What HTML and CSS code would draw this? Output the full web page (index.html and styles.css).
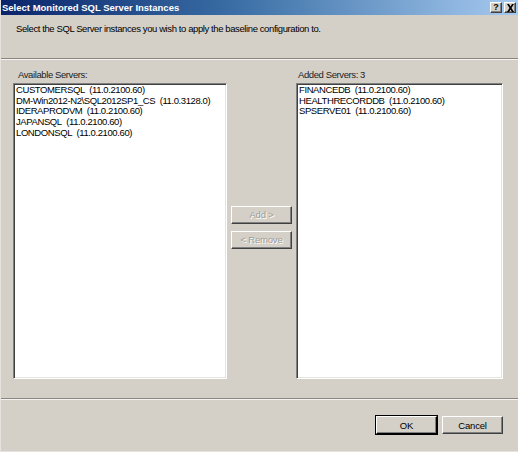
FILE: index.html
```html
<!DOCTYPE html>
<html>
<head>
<meta charset="utf-8">
<link rel="stylesheet" href="styles.css">
</head>
<body>
<div class="window">
  <div class="titlebar">
    <span class="title">Select Monitored SQL Server Instances</span>
    <div class="tbtns">
      <span class="tbtn">?</span>
      <span class="tbtn x">
        <svg width="9" height="8" viewBox="0 0 9 8"><path d="M1 0h2l1.5 2.5L6 0h2L5.5 4 8 8H6L4.5 5.5 3 8H1l2.5-4z" fill="#000"/></svg>
      </span>
    </div>
  </div>
  <div class="header">Select the SQL Server instances you wish to apply the baseline configuration to.</div>
  <div class="sep"></div>
  <div class="main">
    <div class="col left">
      <div class="label">Available Servers:</div>
      <div class="list">
        <div>CUSTOMERSQL&nbsp; (11.0.2100.60)</div>
        <div>DM-Win2012-N2\SQL2012SP1_CS&nbsp; (11.0.3128.0)</div>
        <div>IDERAPRODVM&nbsp; (11.0.2100.60)</div>
        <div>JAPANSQL&nbsp; (11.0.2100.60)</div>
        <div>LONDONSQL&nbsp; (11.0.2100.60)</div>
      </div>
    </div>
    <div class="mid">
      <button class="btn disabled">Add &gt;</button>
      <button class="btn disabled">&lt; Remove</button>
    </div>
    <div class="col right">
      <div class="label">Added Servers: 3</div>
      <div class="list">
        <div>FINANCEDB&nbsp; (11.0.2100.60)</div>
        <div>HEALTHRECORDDB&nbsp; (11.0.2100.60)</div>
        <div>SPSERVE01&nbsp; (11.0.2100.60)</div>
      </div>
    </div>
  </div>
  <div class="sep"></div>
  <div class="footer">
    <button class="btn default">OK</button>
    <button class="btn">Cancel</button>
  </div>
</div>
</body>
</html>
```

FILE: styles.css
```css
html, body {
  margin: 0;
  padding: 0;
  background: #d4d0c8;
}
.window {
  width: 518px;
  height: 452px;
  box-sizing: border-box;
  display: flex;
  flex-direction: column;
  background: #d4d0c8;
  border-left: 1px solid #e6e3de;
  border-bottom: 1px solid #e6e3de;
  font-family: "Liberation Sans", Arial, sans-serif;
  font-size: 9.5px;
  letter-spacing: -0.4px;
  color: #000;
}
.titlebar {
  height: 15px;
  flex: none;
  display: flex;
  align-items: center;
  justify-content: space-between;
  background: linear-gradient(to right, #0a246a 0%, #3a6ea5 45%, #a6caf0 100%);
  padding: 0 2px 0 1px;
  letter-spacing: 0;
}
.title {
  color: #fff;
  font-weight: bold;
  font-size: 9.5px;
}
.tbtns {
  display: flex;
  gap: 2px;
}
.tbtn {
  width: 12px;
  height: 11px;
  box-sizing: border-box;
  background: #d4d0c8;
  border-top: 1px solid #fff;
  border-left: 1px solid #fff;
  border-right: 1px solid #404040;
  border-bottom: 1px solid #404040;
  box-shadow: inset -1px -1px 0 #808080;
  font-weight: bold;
  font-size: 9px;
  line-height: 9px;
  text-align: center;
  display: flex;
  align-items: center;
  justify-content: center;
}
.header {
  height: 43px;
  flex: none;
  box-sizing: border-box;
  padding: 8px 0 0 15px;
}
.sep {
  height: 1px;
  flex: none;
  background: #8a8782;
  border-bottom: 1px solid #f4f3f0;
}
.main {
  flex: 1;
  display: flex;
  padding: 9px 14px 19px 12px;
}
.col {
  display: flex;
  flex-direction: column;
}
.col.left { width: 214px; }
.col.right { width: 207px; }
.label {
  height: 14px;
  padding-left: 5px;
  color: #222;
}
.right .label { padding-left: 2px; }
.list {
  flex: 1;
  background: #fff;
  border-top: 1px solid #808080;
  border-left: 1px solid #808080;
  border-right: 1px solid #fff;
  border-bottom: 1px solid #fff;
  box-shadow: inset 1px 1px 0 #404040, inset -1px -1px 0 #e6e3de;
  padding: 1px 2px;
  line-height: 10.7px;
}
.mid {
  width: 69px;
  display: flex;
  flex-direction: column;
  align-items: center;
  justify-content: center;
  gap: 7px;
  padding-top: 6px;
}
.btn {
  width: 61px;
  height: 18px;
  box-sizing: border-box;
  background: #d4d0c8;
  font-family: "Liberation Sans", Arial, sans-serif;
  font-size: 9.5px;
  letter-spacing: -0.2px;
  color: #000;
  padding: 0;
  border-top: 1px solid #fff;
  border-left: 1px solid #fff;
  border-right: 1px solid #404040;
  border-bottom: 1px solid #404040;
  box-shadow: inset -1px -1px 0 #808080;
}
.btn.disabled {
  color: #a09d97;
  text-shadow: 1px 1px 0 #fff;
}
.btn.default {
  outline: 1px solid #000;
  border-right-color: #000;
  border-bottom-color: #000;
}
.footer {
  height: 51px;
  flex: none;
  display: flex;
  justify-content: flex-end;
  align-items: flex-start;
  gap: 5px;
  padding: 16px 15px 0 0;
  box-sizing: border-box;
}
```
